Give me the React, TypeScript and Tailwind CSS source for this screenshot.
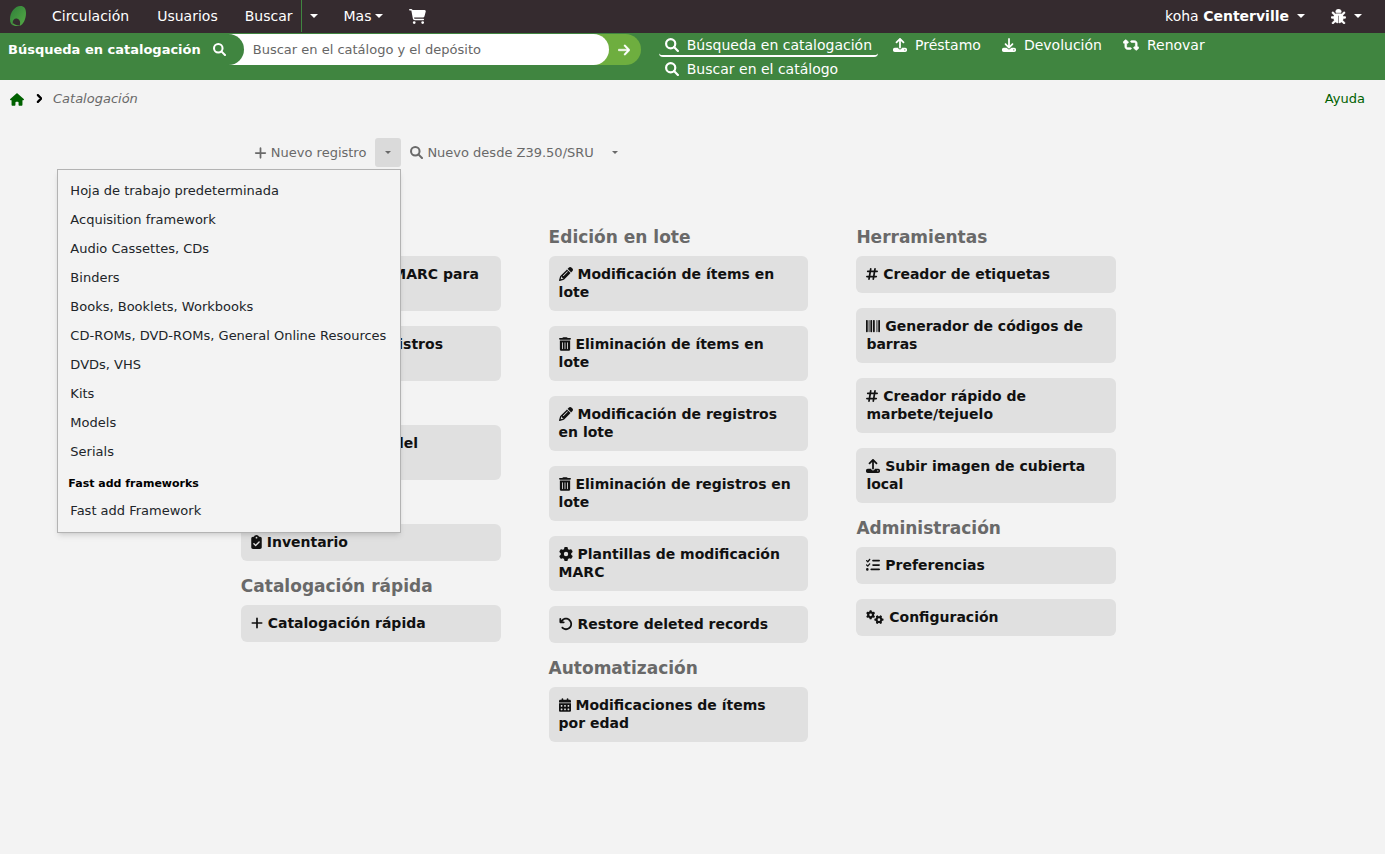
import React, { useState } from "react";
import {
  FaArrowRight,
  FaArrowRotateLeft,
  FaBarcode,
  FaBug,
  FaCalendarDays,
  FaCartShopping,
  FaChevronRight,
  FaClipboardCheck,
  FaDownload,
  FaFileExport,
  FaGear,
  FaGears,
  FaHashtag,
  FaHouse,
  FaListCheck,
  FaPencil,
  FaPlus,
  FaRetweet,
  FaTrashCan,
  FaUpload,
} from "react-icons/fa6";

const frameworks = [
  "Hoja de trabajo predeterminada",
  "Acquisition framework",
  "Audio Cassettes, CDs",
  "Binders",
  "Books, Booklets, Workbooks",
  "CD-ROMs, DVD-ROMs, General Online Resources",
  "DVDs, VHS",
  "Kits",
  "Models",
  "Serials",
];

const tabs = [
  { icon: SearchIcon, size: "h-[14px] w-[14px]", label: "Búsqueda en catalogación", active: true },
  { icon: FaUpload, size: "h-[14px] w-[14px]", label: "Préstamo" },
  { icon: FaDownload, size: "h-[14px] w-[14px]", label: "Devolución" },
  { icon: FaRetweet, size: "h-[14px] w-4 stroke-current stroke-[24]", label: "Renovar" },
  { icon: SearchIcon, size: "h-[14px] w-[14px]", label: "Buscar en el catálogo" },
];

// icon widths follow each glyph's own box
const columns = [
  [
    {
      title: "Importar",
      items: [
        { icon: FaDownload, width: "w-[14px]", label: "Subir registros MARC para importar" },
        { icon: FaGears, width: "w-[18px]", label: "Administrar registros preparados" },
      ],
    },
    {
      title: "Exportar",
      items: [
        { icon: FaFileExport, width: "w-4", label: "Exportar datos del catálogo\u00a0MARC" },
      ],
    },
    {
      title: "Informes",
      items: [{ icon: FaClipboardCheck, width: "w-[11px]", label: "Inventario" }],
    },
    {
      title: "Catalogación rápida",
      items: [{ icon: FaPlus, width: "w-[12px]", label: "Catalogación rápida" }],
    },
  ],
  [
    {
      title: "Edición en lote",
      items: [
        { icon: FaPencil, width: "w-[14px]", label: "Modificación de ítems en lote" },
        { icon: FaTrashCan, width: "w-[12px]", label: "Eliminación de ítems en lote" },
        { icon: FaPencil, width: "w-[14px]", label: "Modificación de registros en lote" },
        { icon: FaTrashCan, width: "w-[12px]", label: "Eliminación de registros en lote" },
        { icon: FaGear, width: "w-[14px]", label: "Plantillas de modificación MARC" },
        { icon: FaArrowRotateLeft, width: "w-[14px]", label: "Restore deleted records" },
      ],
    },
    {
      title: "Automatización",
      items: [
        { icon: FaCalendarDays, width: "w-[12px]", label: "Modificaciones de ítems por\u00a0edad" },
      ],
    },
  ],
  [
    {
      title: "Herramientas",
      items: [
        { icon: FaHashtag, width: "w-[12px]", label: "Creador de etiquetas" },
        { icon: FaBarcode, width: "w-[14px]", label: "Generador de códigos de barras" },
        { icon: FaHashtag, width: "w-[12px]", label: "Creador rápido de marbete/tejuelo" },
        { icon: FaUpload, width: "w-[14px]", label: "Subir imagen de cubierta local" },
      ],
    },
    {
      title: "Administración",
      items: [
        { icon: FaListCheck, width: "w-[14px]", label: "Preferencias" },
        { icon: FaGears, width: "w-[18px]", label: "Configuración" },
      ],
    },
  ],
];

function SearchIcon({ className }: { className?: string }) {
  return (
    <svg viewBox="0 0 512 512" fill="none" stroke="currentColor" strokeWidth="80" className={className}>
      <circle cx="208" cy="208" r="168" />
      <path d="M330 330L472 472" strokeLinecap="round" />
    </svg>
  );
}

function Caret() {
  return (
    <span className="inline-block border-x-4 border-t-4 border-x-transparent border-t-current" />
  );
}

function SmallCaret() {
  return (
    <span className="inline-block border-x-3 border-t-3 border-x-transparent border-t-current" />
  );
}

function Logo() {
  return (
    <svg viewBox="0 0 16 20" className="h-5 w-4">
      <defs>
        <linearGradient id="leaf" x1="0" y1="0" x2="1" y2="1">
          <stop offset="0" stopColor="#2f7d3a" />
          <stop offset="1" stopColor="#55ab45" />
        </linearGradient>
      </defs>
      <path
        fill="url(#leaf)"
        d="M10.5 0C14 0 16 2.500 16 7c0 6-2.500 11.500-6.500 13 1.400-2.800.6-6.400-2-7.200C4.900 12 2.700 13.500 2.600 17.200c0 .8.2 1.500.5 2.200C1.200 18.400 0 16.300 0 13.200 0 6.500 4.800 0 10.500 0z"
      />
      <path fill="#4ea043" d="M2.600 16.500c1 1.800 3 2.900 7.200 2.900C7 20.400 3.500 20.300 2.600 18.500z" />
    </svg>
  );
}

function TopNav() {
  return (
    <nav className="flex h-[33px] items-center justify-between bg-[#352b2f] pr-[23px] pb-px pl-2.5 text-sm text-white">
      <div className="flex h-full items-center">
        <a href="#" aria-label="Koha">
          <Logo />
        </a>
        <a href="#" className="ml-[26px]">Circulación</a>
        <a href="#" className="ml-7">Usuarios</a>
        <a href="#" className="ml-[27px]">Buscar</a>
        <button
          type="button"
          aria-label="Opciones de búsqueda"
          className="ml-2 flex h-full items-center border-l border-l-[#408540] pl-2"
        >
          <Caret />
        </button>
        <button type="button" className="ml-[26px] flex items-center gap-1">
          Mas <Caret />
        </button>
        <a href="#" aria-label="Carrito" className="ml-[26px]">
          <FaCartShopping className="h-[15px] w-[17px]" />
        </a>
      </div>
      <div className="flex items-center gap-[26px]">
        <button type="button" className="flex items-center gap-2">
          <span>
            koha <strong>Centerville</strong>
          </span>
          <Caret />
        </button>
        <button type="button" aria-label="Depuración" className="flex items-center gap-2">
          <FaBug className="h-[15px] w-[15px] stroke-current stroke-[16]" />
          <Caret />
        </button>
      </div>
    </nav>
  );
}

function SearchBar() {
  return (
    <div className="flex bg-[#408540] pb-[15px] text-white">
      <form className="mt-px flex h-[31px] shrink-0 rounded-r-full bg-[#6eae3f]">
        <div className="flex rounded-r-full bg-white">
          <label
            htmlFor="search"
            className="flex items-center gap-3 rounded-r-full bg-[#408540] pr-[18px] pl-2 text-[13px] font-bold"
          >
            Búsqueda en catalogación
            <SearchIcon className="h-[13px] w-[13px]" />
          </label>
          <input
            id="search"
            type="text"
            placeholder="Buscar en el catálogo y el depósito"
            className="w-[365px] rounded-r-full pl-[9px] text-[13px] text-black outline-none placeholder:text-[#666]"
          />
        </div>
        <button type="submit" aria-label="Buscar" className="flex w-8 items-center justify-center pr-0.5">
          <FaArrowRight className="h-[14px] w-[12px] stroke-current stroke-[16]" />
        </button>
      </form>
      <ul className="-mb-[15px] ml-[18px] flex flex-wrap content-start gap-x-[9px] text-sm">
        {tabs.map((t) => (
          <li key={t.label}>
            <a
              href="#"
              className={
                t.active
                  ? "flex h-6 items-center gap-2 rounded-sm border-b-2 border-white px-1.5 pt-0.5"
                  : "flex h-[23px] items-center gap-2 px-1.5"
              }
            >
              <t.icon className={t.size} />
              {t.label}
            </a>
          </li>
        ))}
      </ul>
    </div>
  );
}

function Toolbar() {
  const [open, setOpen] = useState(true);

  return (
    <div className="flex pl-[5px] text-[13px] text-[#696969]">
      <div className="relative flex">
        <button type="button" className="flex h-[29px] items-center gap-1 px-2">
          <FaPlus className="h-[14px] w-[13px]" />
          Nuevo registro
        </button>
        <button
          type="button"
          aria-label="Hojas de trabajo"
          aria-expanded={open}
          onClick={() => setOpen(!open)}
          className="ml-px flex h-[29px] w-[26px] items-center justify-center rounded-[3px] bg-[#dadada]"
        >
          <SmallCaret />
        </button>
        {open && (
          <ul className="absolute top-full right-0 z-10 mt-0.5 border border-[#b3b3b3] bg-[#f3f3f3] pt-1.5 pb-[7px] whitespace-nowrap text-[#212529] shadow-md">
            {frameworks.map((f) => (
              <li key={f}>
                <a href="#" className="block pr-3.5 pl-3 leading-[29px]">{f}</a>
              </li>
            ))}
            <li className="px-2.5 pt-[5px] text-[11px] leading-[26px] font-bold text-black">
              Fast add frameworks
            </li>
            <li>
              <a href="#" className="block pr-3.5 pl-3 leading-7">Fast add Framework</a>
            </li>
          </ul>
        )}
      </div>
      <button type="button" className="ml-px flex h-[29px] items-center gap-1 px-2">
        <SearchIcon className="h-[13px] w-[13px]" />
        Nuevo desde Z39.50/SRU
      </button>
      <button
        type="button"
        aria-label="Opciones de Z39.50/SRU"
        className="flex h-[29px] w-[26px] items-center justify-center"
      >
        <SmallCaret />
      </button>
    </div>
  );
}

export default function App() {
  return (
    <div className="min-h-screen bg-[#f3f3f3] font-['DejaVu_Sans',sans-serif]">
      <TopNav />
      <SearchBar />

      <div className="flex items-center justify-between pt-2.5 pr-5 pl-2.5 text-[13px] leading-[18px]">
        <nav aria-label="Ruta" className="flex items-center">
          <a href="#" aria-label="Inicio" className="text-[#006100]">
            <FaHouse className="h-[13px] w-[14px]" />
          </a>
          <FaChevronRight className="mb-0.5 ml-3 h-[9px] w-[6px] stroke-current stroke-[64]" />
          <span className="ml-[11px] text-[#696969] italic">Catalogación</span>
        </nav>
        <a href="#" className="text-[#006100]">Ayuda</a>
      </div>

      <main className="mx-auto w-2/3 pt-[30px]">
        <div className="pl-2.5">
          <Toolbar />
        </div>
        <div className="grid grid-cols-3 pt-[60px]">
          {columns.map((sections, i) => (
            <div key={i} className="pr-[38px] pl-2.5">
              {sections.map((s) => (
                <section key={s.title}>
                  <h3 className="mb-[9px] text-[17px] leading-5 font-bold text-[#696969]">{s.title}</h3>
                  <ul>
                    {s.items.map((item) => (
                      <li key={item.label} className="mb-[15px]">
                        <a
                          href="#"
                          className="block rounded-md bg-[#e0e0e0] px-2.5 pt-[9px] pb-2.5 text-sm leading-[18px] font-bold text-[#111]"
                        >
                          <item.icon className={`inline h-[14px] align-[-2px] ${item.width}`} /> {item.label}
                        </a>
                      </li>
                    ))}
                  </ul>
                </section>
              ))}
            </div>
          ))}
        </div>
      </main>
    </div>
  );
}
